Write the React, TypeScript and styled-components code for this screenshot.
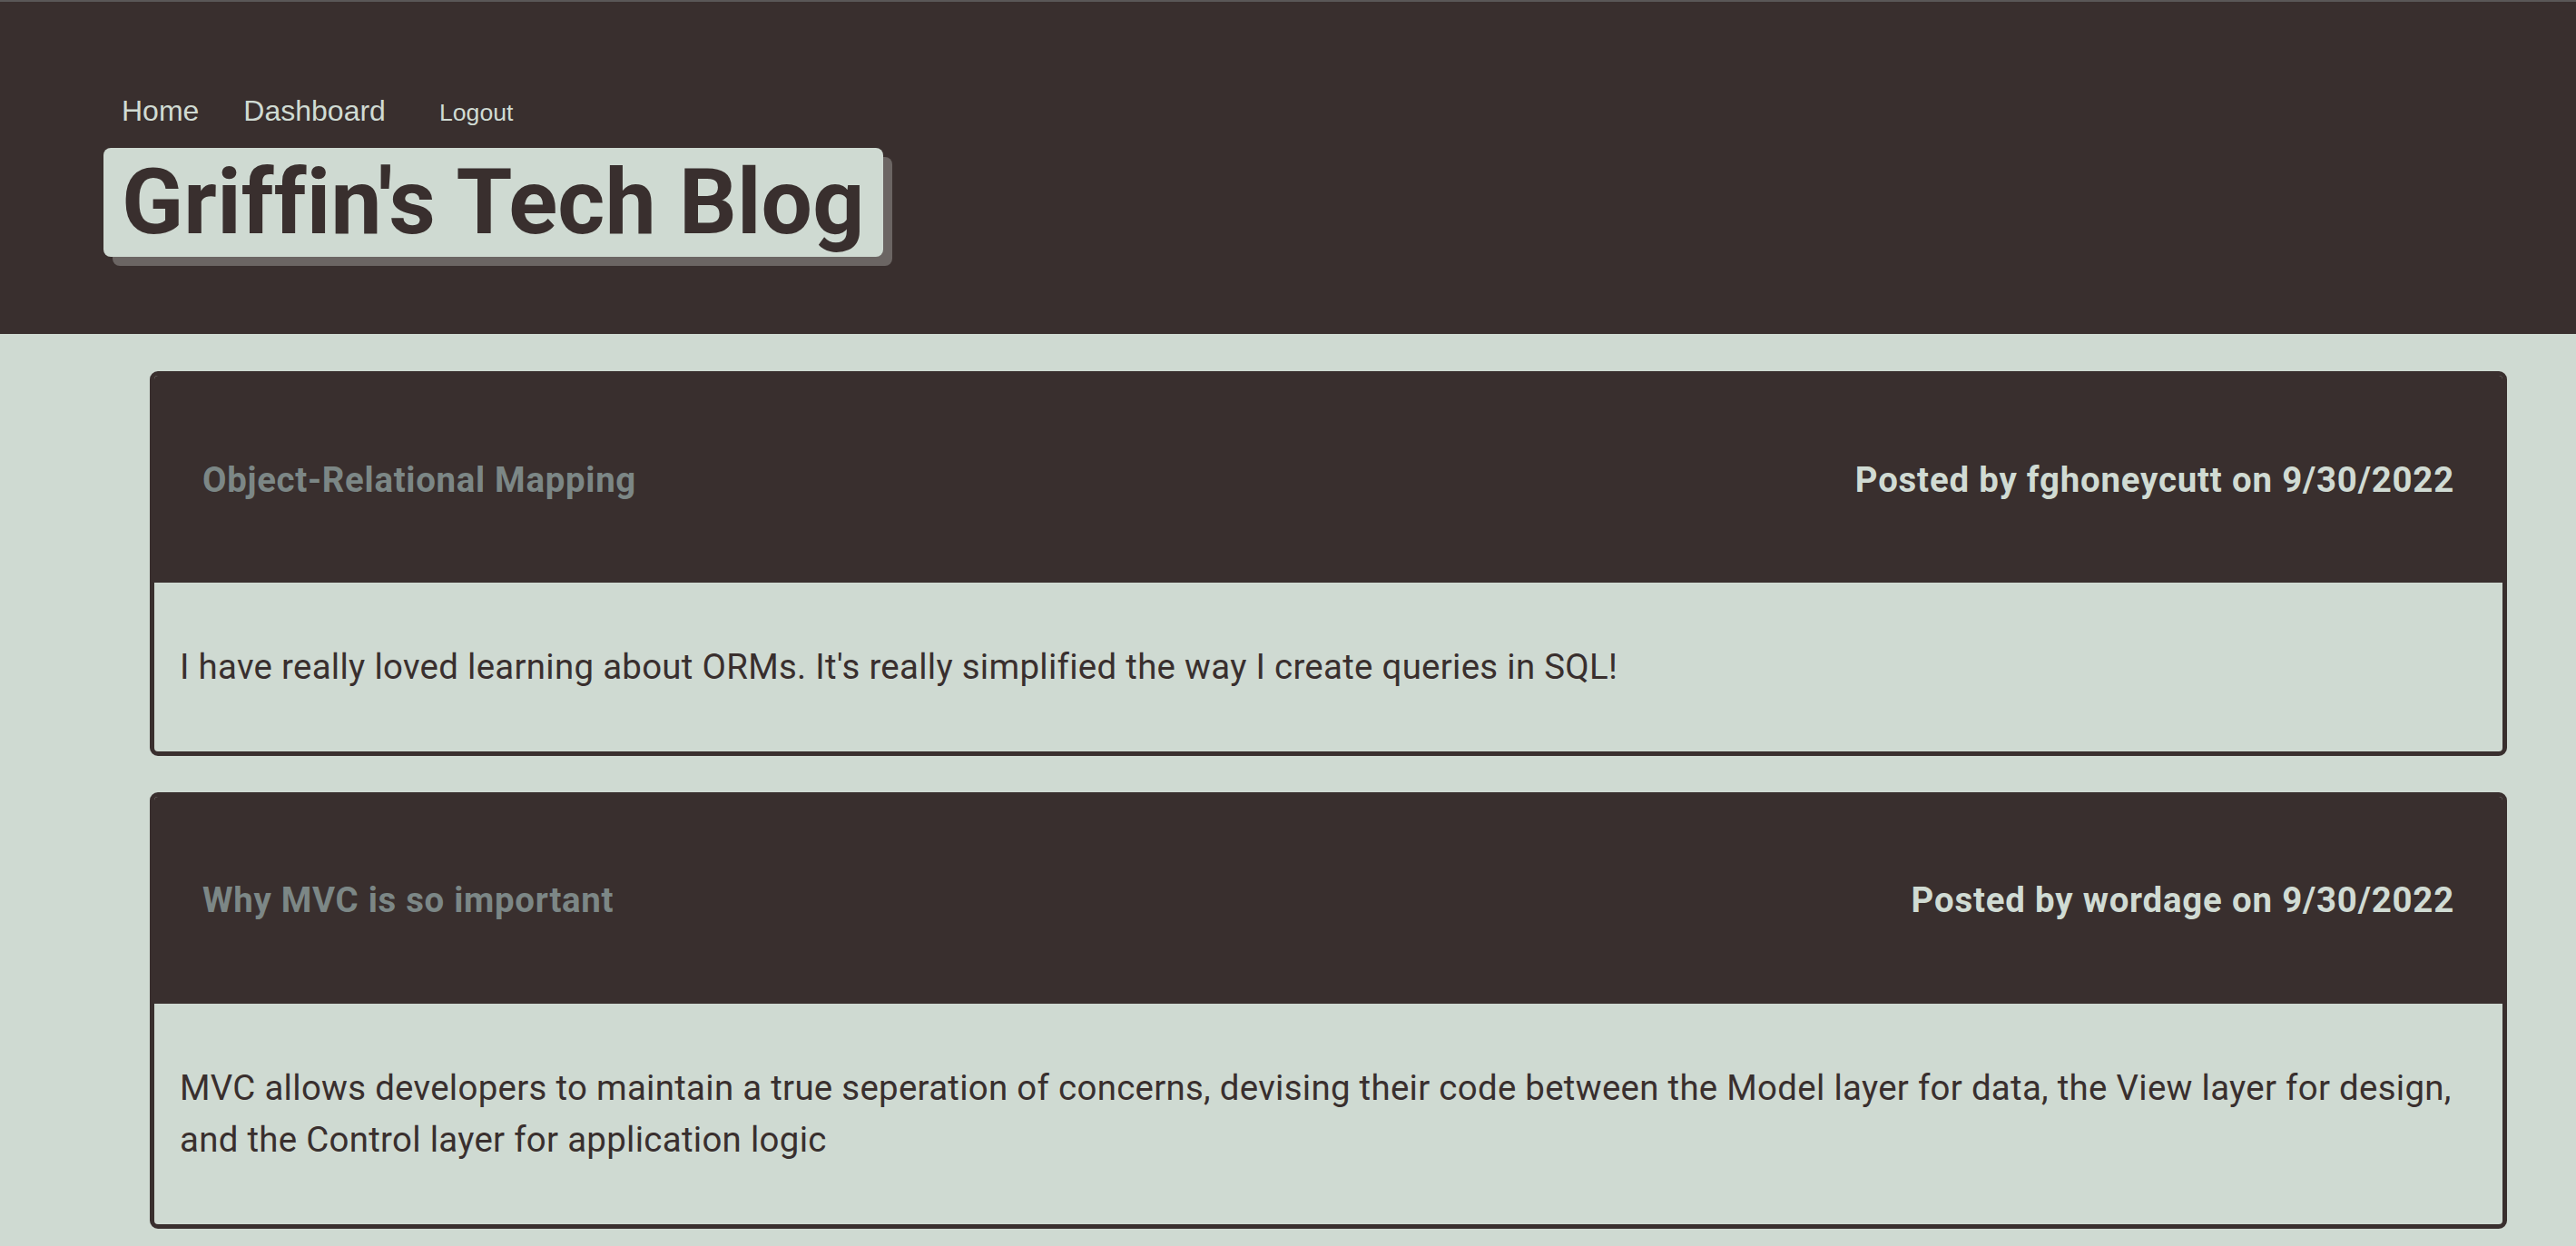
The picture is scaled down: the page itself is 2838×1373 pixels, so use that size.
import React, { FunctionComponent } from 'react';
import styled, { createGlobalStyle } from 'styled-components';

const GlobalStyle = createGlobalStyle`
  html, body {
    margin: 0;
    padding: 0;
    background-color: #cfdad2;
  }
  #root {
    min-height: 100vh;
  }
`;

const Page = styled.div`
  min-height: 100vh;
  background-color: #cfdad2;
  font-family: Roboto, 'Liberation Sans', sans-serif;
`;

const Header = styled.header`
  background-color: #392f2e;
  border-top: 2px solid #5a5757;
  padding: 102px 0 85px 114px;
`;

const Nav = styled.nav`
  display: flex;
  align-items: baseline;
  padding-left: 20px;
  margin-bottom: 22px;
  font-family: 'Liberation Sans', Arial, sans-serif;
`;

const NavLink = styled.a<{ $gap: number }>`
  color: #d0dbd3;
  font-size: 32px;
  text-decoration: none;
  margin-right: ${({ $gap }) => $gap}px;
  cursor: pointer;
`;

const LogoutButton = styled.button`
  background: none;
  border: none;
  padding: 0;
  color: #d0dbd3;
  font-family: 'Liberation Sans', Arial, sans-serif;
  font-size: 26.67px;
  cursor: pointer;
`;

const Title = styled.h1`
  display: inline-block;
  margin: 0;
  padding: 4px 20px 4px 20px;
  background-color: #cfdad2;
  color: #392f2e;
  border-radius: 8px;
  box-shadow: 10px 10px 0 #6b6563;
  font-family: Roboto, sans-serif;
  font-weight: 700;
  font-size: 100px;
  line-height: 112px;
  letter-spacing: 0.2px;
`;

const Main = styled.main`
  padding: 41px 76px 20px 165px;
  display: flex;
  flex-direction: column;
  gap: 40px;
`;

const Card = styled.article`
  border: 5px solid #392f2e;
  border-radius: 9px;
  overflow: hidden;
  background-color: #cfdad2;
`;

const CardHeader = styled.div`
  height: 228px;
  display: flex;
  align-items: center;
  justify-content: space-between;
  padding: 0 53px;
  background-color: #392f2e;
`;

const PostTitle = styled.h2`
  margin: 0;
  font-size: 38.4px;
  font-weight: 700;
  letter-spacing: 0.7px;
  color: #7c8786;
`;

const PostMeta = styled.span`
  font-size: 38.4px;
  font-weight: 700;
  letter-spacing: 0.8px;
  color: #d0dbd3;
`;

const CardBody = styled.p`
  margin: 0;
  padding: 64px 28px;
  font-size: 38.4px;
  line-height: 1.5;
  letter-spacing: 0.3px;
  color: #392f2e;
`;

const posts = [
  {
    id: 1,
    title: 'Object-Relational Mapping',
    author: 'fghoneycutt',
    date: '9/30/2022',
    body: "I have really loved learning about ORMs. It's really simplified the way I create queries in SQL!",
  },
  {
    id: 2,
    title: 'Why MVC is so important',
    author: 'wordage',
    date: '9/30/2022',
    body: 'MVC allows developers to maintain a true seperation of concerns, devising their code between the Model layer for data, the View layer for design, and the Control layer for application logic',
  },
];

const App: FunctionComponent = () => {
  return <Page>
    <GlobalStyle />
    <Header>
      <Nav>
        <NavLink $gap={49}>Home</NavLink>
        <NavLink $gap={59}>Dashboard</NavLink>
        <LogoutButton>Logout</LogoutButton>
      </Nav>
      <Title>Griffin's Tech Blog</Title>
    </Header>
    <Main>
      {posts.map(({ id, title, author, date, body }) => <Card key={id}>
        <CardHeader>
          <PostTitle>{title}</PostTitle>
          <PostMeta>Posted by {author} on {date}</PostMeta>
        </CardHeader>
        <CardBody>{body}</CardBody>
      </Card>)}
    </Main>
  </Page>
}

export default App;
